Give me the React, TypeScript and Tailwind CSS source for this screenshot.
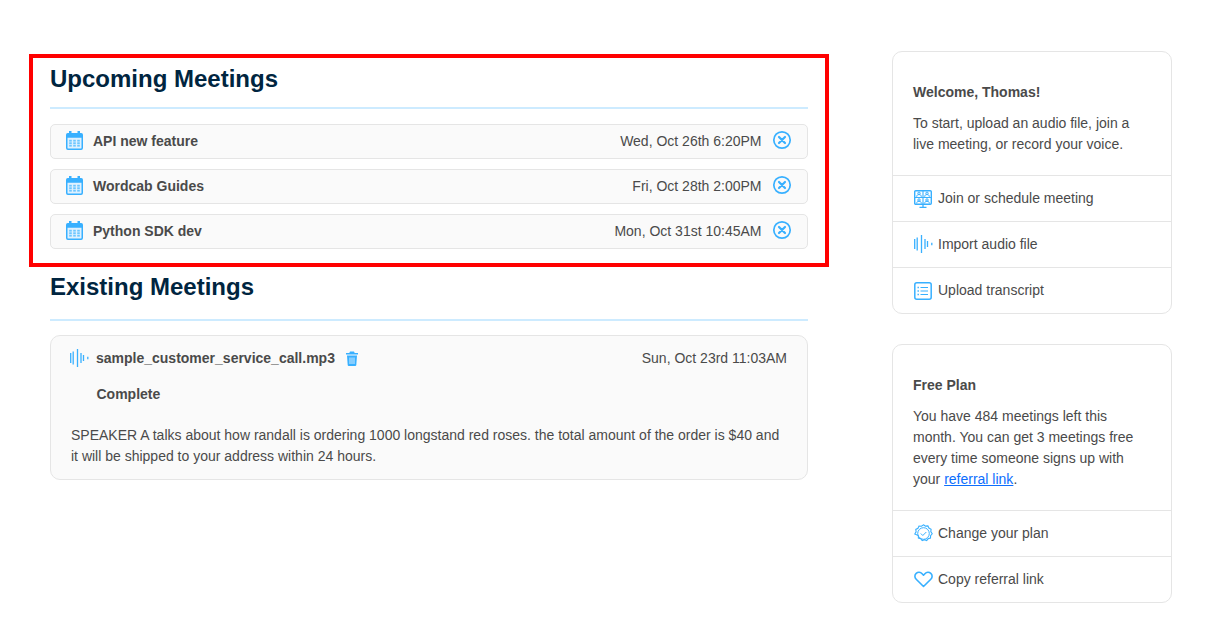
const BLUE = "#38b0ff";

function CalendarIcon() {
  return (
    <svg width="17" height="19" viewBox="0 0 17 19" className="shrink-0 mb-[3px]">
      <rect x="0.75" y="2.75" width="15.5" height="15.500" rx="1.200" fill="#dff1ff" stroke={BLUE} strokeWidth="1.500" />
      <rect x="0.750" y="2.750" width="15.500" height="4" fill={BLUE} />
      <rect x="3" y="0" width="2.500" height="4" fill={BLUE} />
      <rect x="11.500" y="0" width="2.500" height="4" fill={BLUE} />
      {[8.800, 11.300, 13.800].map((y) =>
        [3.200, 7.200, 11.200].map((x) => <rect key={`${x}-${y}`} x={x} y={y} width="2.600" height="1.800" fill="#6cc5ff" />)
      )}
    </svg>
  );
}

function CloseIcon() {
  return (
    <svg width="20" height="20" viewBox="0 0 20 20" className="shrink-0 mb-[3px]">
      <circle cx="10" cy="10" r="8.200" fill="none" stroke={BLUE} strokeWidth="1.700" />
      <path d="M7 7l6 6M13 7l-6 6" stroke={BLUE} strokeWidth="2.200" strokeLinecap="round" />
    </svg>
  );
}

function WaveIcon() {
  const bars: [number, number][] = [[0.7, 5], [3.200, 6.500], [7.500, 9], [11, 5], [13.500, 3], [17.800, 1.200]];
  return (
    <svg width="19" height="18" viewBox="0 0 19 18" className="shrink-0 mb-[1px]">
      {bars.map(([x, h]) => (
        <line key={x} x1={x} x2={x} y1={9 - h} y2={9 + h} stroke={BLUE} strokeWidth="1.300" />
      ))}
    </svg>
  );
}

function TrashIcon() {
  return (
    <svg width="14" height="15" viewBox="0 0 14 15" className="shrink-0 mb-[1px]">
      <path d="M5 .5h4l.7 1.500H13v1.600H1V2h3.300z" fill={BLUE} />
      <path d="M2 4.600h10l-.7 9.400a1 1 0 0 1-1 .9H3.700a1 1 0 0 1-1-.9z" fill={BLUE} />
      <path d="M5 6.500v6.500M7 6.500v6.500M9 6.500v6.500" stroke="#e3f3ff" strokeWidth="0.900" />
    </svg>
  );
}

function MeetingIcon() {
  return (
    <svg width="18" height="18" viewBox="0 0 18 18" className="shrink-0" fill="none" stroke={BLUE}>
      <rect x="0.700" y="0.700" width="16.600" height="13.600" rx="1" strokeWidth="1.400" />
      <line x1="9" y1="1" x2="9" y2="14" strokeWidth="1.100" />
      <line x1="1" y1="7.500" x2="17" y2="7.500" strokeWidth="1.100" />
      <path d="M9 14v3.300M5.500 17.300h7" strokeWidth="1.300" />
      {[5, 13].map((x) =>
        [3.300, 10].map((y) => (
          <g key={`${x}-${y}`} strokeWidth="1">
            <circle cx={x} cy={y} r="1.200" />
            <path d={`M${x - 2.300} ${y + 3.500}c0-1.800.9-2.200 2.300-2.200s2.300.4 2.300 2.200`} />
          </g>
        ))
      )}
    </svg>
  );
}

function ListIcon() {
  return (
    <svg width="18" height="18" viewBox="0 0 18 18" className="shrink-0" fill="none" stroke={BLUE}>
      <rect x="0.800" y="0.800" width="16.400" height="16.400" rx="2" strokeWidth="1.500" />
      <path d="M6.500 5.500h7.500M6.500 9h7.500M6.500 12.500h7.500" strokeWidth="1.100" />
      <path d="M3.500 5.500h1.400M3.500 9h1.400M3.500 12.500h1.400" strokeWidth="1.400" />
    </svg>
  );
}

function BadgeIcon() {
  return (
    <svg width="19" height="19" viewBox="0 0 19 19" className="shrink-0" fill="none" stroke={BLUE}>
      <path
        d="M9.500 .8l2 1.300 2.400-.2 1 2.200 2.200 1.100-.3 2.400 1.400 2.200-1.600 1.800-.1 2.400-2.300.6-1.500 1.900-2.200-.8-2.300.8-1.500-1.900-2.300-.6-.1-2.400L.800 10l1.300-2.200-.3-2.400 2.200-1.100 1-2.200 2.400.2z"
        strokeWidth="1.100"
      />
      <circle cx="9.500" cy="9.500" r="5.800" strokeWidth="1" />
      <path d="M6.800 9.500l2 2 3.500-3.500" strokeWidth="1" />
    </svg>
  );
}

function HeartIcon() {
  return (
    <svg width="19" height="17" viewBox="0 0 19 17" className="shrink-0" fill="none" stroke={BLUE}>
      <path
        d="M9.500 15.500L2.200 8.300C.4 6.500.5 3.800 2.200 2.300c1.700-1.500 4.300-1.300 5.900.4l1.400 1.500 1.400-1.500c1.600-1.700 4.200-1.900 5.900-.4 1.700 1.500 1.800 4.200 0 6z"
        strokeWidth="1.600"
        strokeLinejoin="round"
      />
    </svg>
  );
}

const upcoming = [
  { title: "API new feature", date: "Wed, Oct 26th 6:20PM" },
  { title: "Wordcab Guides", date: "Fri, Oct 28th 2:00PM" },
  { title: "Python SDK dev", date: "Mon, Oct 31st 10:45AM" },
];

function ActionRow({ icon, label }: { icon: React.ReactNode; label: string }) {
  return (
    <div className="h-[46px] border-t border-[#e5e5e5] pl-[21px] flex items-center">
      <span className="w-[24px] flex items-center">{icon}</span>
      <span>{label}</span>
    </div>
  );
}

export default function App() {
  return (
    <div
      className="w-[1205px] h-[636px] overflow-hidden bg-white text-[14px] leading-[21px] text-[#4a4a4a] flex items-start pl-[50px] pt-[51px]"
      style={{ fontFamily: '"Liberation Sans", Arial, sans-serif' }}
    >
      <main className="w-[758px] shrink-0 pt-[3px]">
        <section className="-ml-[21px] w-[800px] h-[213px] border-4 border-[#ff0000] px-[17px]">
          <h2 className="text-[24px] leading-[32px] font-bold text-[#002540] mt-[5px]">Upcoming Meetings</h2>
          <div className="h-[2px] bg-[#cdebff] mt-[12px]" />
          <div className="mt-[15px] flex flex-col gap-[10px]">
            {upcoming.map((m) => (
              <div
                key={m.title}
                className="h-[35px] rounded-[5px] border border-[#e5e5e5] bg-[#fafafa] px-[15px] flex items-center"
              >
                <CalendarIcon />
                <span className="ml-[10px] font-bold">{m.title}</span>
                <span className="ml-auto mr-[10.5px]">{m.date}</span>
                <CloseIcon />
              </div>
            ))}
          </div>
        </section>

        <h2 className="text-[24px] leading-[32px] font-bold text-[#002540] mt-[4px]">Existing Meetings</h2>
        <div className="h-[2px] bg-[#cdebff] mt-[16px]" />
        <div className="mt-[14px] h-[145px] rounded-[10px] border border-[#e5e5e5] bg-[#fafafa] px-[20px] pt-[12px]">
          <div className="flex items-center h-[21px]">
            <span className="-ml-[1px]"><WaveIcon /></span>
            <span className="ml-[7px] font-bold">sample_customer_service_call.mp3</span>
            <span className="ml-[10.5px]"><TrashIcon /></span>
            <span className="ml-auto">Sun, Oct 23rd 11:03AM</span>
          </div>
          <div className="font-bold pl-[25.5px] mt-[15px]">Complete</div>
          <p className="mt-[20px]">
            SPEAKER A talks about how randall is ordering 1000 longstand red roses. the total amount of the order is $40 and it will be shipped to your address within 24 hours.
          </p>
        </div>
      </main>

      <aside className="w-[280px] ml-[84px] shrink-0 flex flex-col gap-[30px]">
        <div className="h-[263px] rounded-[10px] border border-[#e5e5e5] overflow-hidden">
          <div className="h-[123px] px-[20px] pt-[30px]">
            <div className="font-bold">Welcome, Thomas!</div>
            <p className="mt-[10px]">To start, upload an audio file, join a live meeting, or record your voice.</p>
          </div>
          <ActionRow icon={<MeetingIcon />} label="Join or schedule meeting" />
          <ActionRow icon={<WaveIcon />} label="Import audio file" />
          <ActionRow icon={<ListIcon />} label="Upload transcript" />
        </div>

        <div className="h-[259px] rounded-[10px] border border-[#e5e5e5] overflow-hidden">
          <div className="h-[165px] px-[20px] pt-[30px]">
            <div className="font-bold">Free Plan</div>
            <p className="mt-[10px]">
              You have 484 meetings left this month. You can get 3 meetings free every time someone signs up with your{" "}
              <a className="text-[#0d6efd] underline" href="#">referral link</a>.
            </p>
          </div>
          <ActionRow icon={<BadgeIcon />} label="Change your plan" />
          <ActionRow icon={<HeartIcon />} label="Copy referral link" />
        </div>
      </aside>
    </div>
  );
}
